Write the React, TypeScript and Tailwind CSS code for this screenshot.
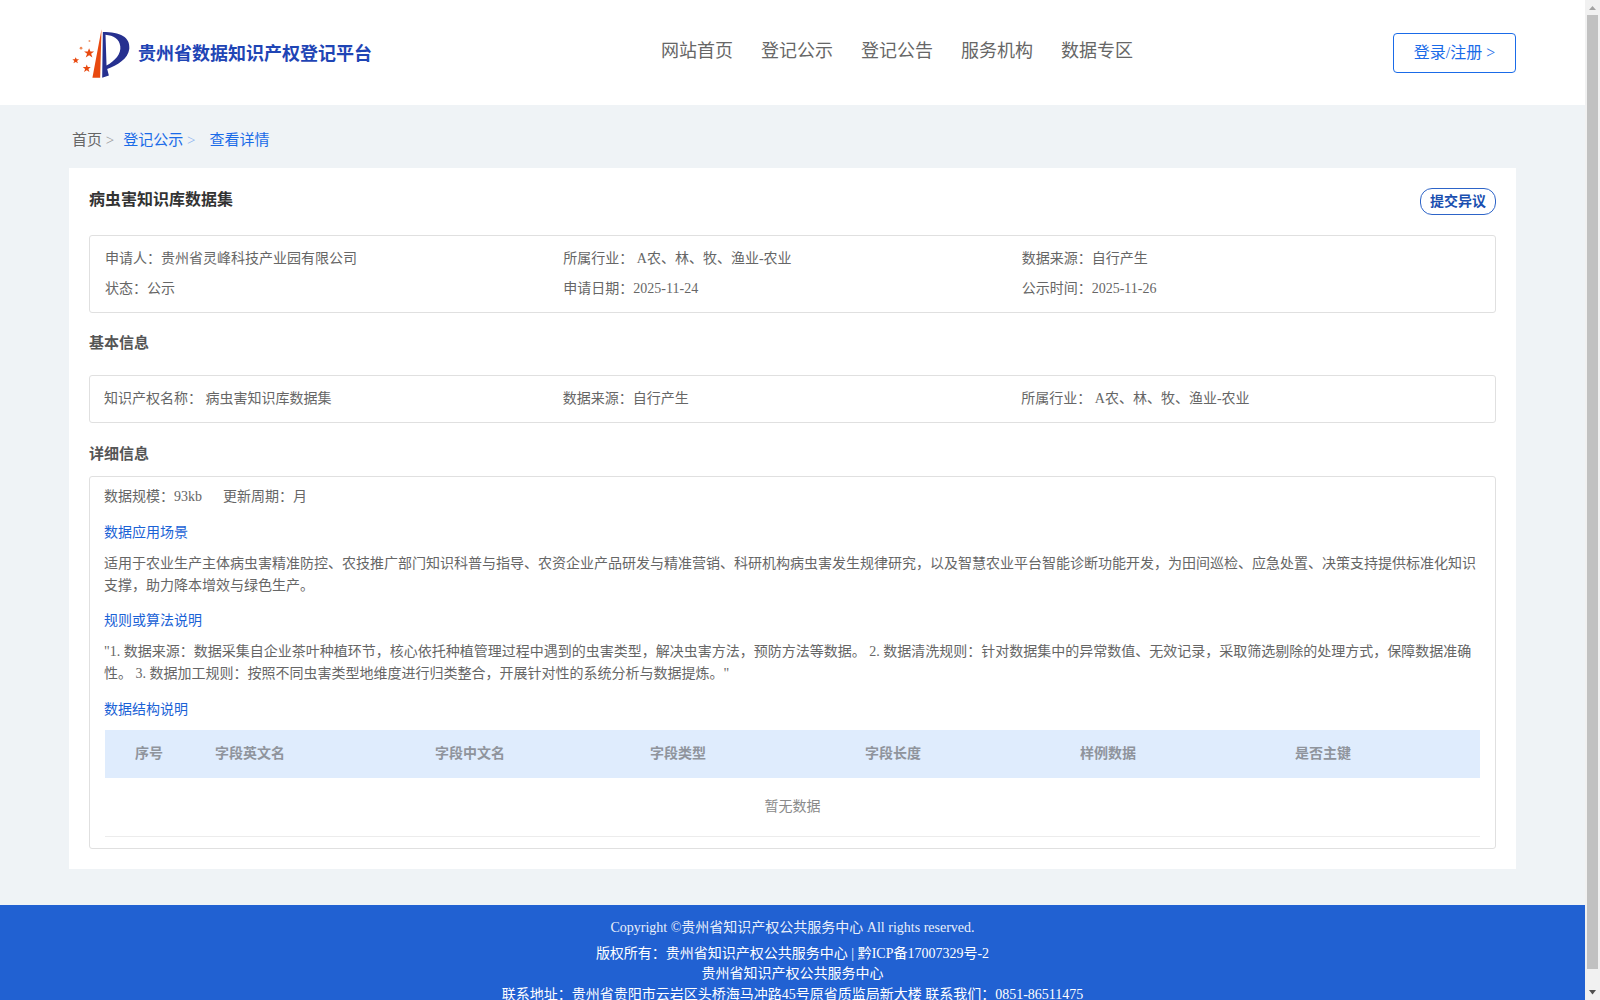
import React from "react";

const FONT = "font-['Liberation_Serif','Noto_Sans_CJK_SC',serif]";

const navItems = ["网站首页", "登记公示", "登记公告", "服务机构", "数据专区"];

// columns of the table header
const columns = [
  { label: "字段英文名", width: "w-[220px]" },
  { label: "字段中文名", width: "w-[215px]" },
  { label: "字段类型", width: "w-[215px]" },
  { label: "字段长度", width: "w-[215px]" },
  { label: "样例数据", width: "w-[215px]" },
  { label: "是否主键", width: "flex-1" },
];

const Logo = () => (
  <svg viewBox="30 35 185 155" className="w-[62px] h-[52px] shrink-0">
    <path d="M124 42 L97 186 L120 186 Z" fill="#e8490f" />
    <path
      d="M128 50 C180 50 210 65 207 100 C204 130 170 150 141 160 L146 180 L126 186 Z M139 150 C165 135 183 115 180 92 C177 70 160 60 136 58 Z"
      fill="#26308f"
      fillRule="evenodd"
    />
    <polygon points="87,98 91,108 102,108 93,115 97,126 87,119 77,126 81,115 72,108 83,108" fill="#e8490f" />
    <polygon points="47,125 50,131 57,131 51,136 54,143 47,139 40,143 43,136 37,131 44,131" fill="#e8490f" />
    <polygon points="80,147 83,154 92,154 85,160 88,169 80,164 72,169 75,160 68,154 77,154" fill="#e8490f" />
    <circle cx="63" cy="98" r="4" fill="#ef8a5a" />
    <circle cx="88" cy="77" r="3" fill="#ef9a70" />
  </svg>
);

const Header = () => (
  <header className="h-[105px] bg-white flex items-center pl-[70px] pr-[69px] shrink-0">
    <div className="w-[591px] flex items-center gap-[6px] shrink-0">
      <Logo />
      <span className="text-[18px] font-bold text-[#1f45b5] mt-[4px] whitespace-nowrap">
        贵州省数据知识产权登记平台
      </span>
    </div>
    <nav className="flex gap-[28px] text-[18px] text-[#666] -mt-[2px]">
      {navItems.map((item) => (
        <span key={item}>{item}</span>
      ))}
    </nav>
    <button className="ml-auto w-[123px] h-[40px] rounded border border-[#1a6be8] text-[#1a6be8] text-[16px] mt-[1px]">
      登录/注册 &gt;
    </button>
  </header>
);

const InfoBox = ({ rows, className }: { rows: string[][]; className: string }) => (
  <div className={`border border-[#e0e0e0] rounded-[3px] text-[14px] text-[#666] ${className}`}>
    {rows.map((row) => (
      <div key={row[0]} className="grid grid-cols-3 h-[30px] items-center">
        {row.map((cell) => (
          <div key={cell}>{cell}</div>
        ))}
      </div>
    ))}
  </div>
);

const BlueTitle = ({ children, className }: { children: React.ReactNode; className: string }) => (
  <div className={`text-[14px] leading-[22px] text-[#1a62d6] ${className}`}>{children}</div>
);

const Detail = () => (
  <div className="border border-[#e0e0e0] rounded-[3px] mt-[11px] h-[373px] pl-[14px] pr-[15px] text-[14px] text-[#666]">
    <div className="leading-[22px] mt-[9px] flex gap-[21px]">
      <span>数据规模：93kb</span>
      <span>更新周期：月</span>
    </div>
    <BlueTitle className="mt-[14px]">数据应用场景</BlueTitle>
    <p className="mt-[9px] leading-[22px]">
      适用于农业生产主体病虫害精准防控、农技推广部门知识科普与指导、农资企业产品研发与精准营销、科研机构病虫害发生规律研究，以及智慧农业平台智能诊断功能开发，为田间巡检、应急处置、决策支持提供标准化知识支撑，助力降本增效与绿色生产。
    </p>
    <BlueTitle className="mt-[13px]">规则或算法说明</BlueTitle>
    <p className="mt-[9px] leading-[22px]">
      "1. 数据来源：数据采集自企业茶叶种植环节，核心依托种植管理过程中遇到的虫害类型，解决虫害方法，预防方法等数据。 2. 数据清洗规则：针对数据集中的异常数值、无效记录，采取筛选剔除的处理方式，保障数据准确性。 3. 数据加工规则：按照不同虫害类型地维度进行归类整合，开展针对性的系统分析与数据提炼。"
    </p>
    <BlueTitle className="mt-[14px]">数据结构说明</BlueTitle>
    <div className="ml-[1px] mt-[9px] h-[48px] pb-[2px] bg-[#dfecfd] flex items-center font-bold text-[#8f949c]">
      <div className="w-[110px] pl-[30px] shrink-0">序号</div>
      {columns.map((col) => (
        <div key={col.label} className={`${col.width} shrink-0`}>{col.label}</div>
      ))}
    </div>
    <div className="ml-[1px] h-[59px] pb-[1px] flex items-center justify-center border-b border-[#ececec] text-[#8a8a8a]">
      暂无数据
    </div>
  </div>
);

const Scrollbar = () => (
  <div className="w-[15px] h-full bg-[#f1f1f1] flex flex-col items-center shrink-0">
    <svg viewBox="0 0 15 15" className="w-[15px] h-[15px] shrink-0">
      <path d="M4 10 L7.5 6 L11 10 Z" fill="#a3a3a3" />
    </svg>
    <div className="w-[11px] h-[954px] bg-[#c1c1c1]" />
    <div className="flex-1" />
    <svg viewBox="0 0 15 15" className="w-[15px] h-[15px] shrink-0">
      <path d="M4 5 L11 5 L7.5 9.5 Z" fill="#505050" />
    </svg>
  </div>
);

const App: React.FC = () => {
  return (
    <div className={`h-screen overflow-hidden flex bg-[#eff3f6] ${FONT}`}>
      <div className="flex-1 min-w-0 h-[1000px] overflow-hidden flex flex-col">
        <Header />
        {/* breadcrumb */}
        <div className="h-[63px] pl-[72px] pt-[24px] text-[15px] leading-[22px] text-[#666] shrink-0">
          首页 <span className="text-[#999]">&gt;</span>
          <span className="text-[#1a6be8] ml-[9px]">登记公示 <span className="text-[#8db4f0]">&gt;</span></span>
          <span className="text-[#1a6be8] ml-[14px]">查看详情</span>
        </div>

        <main className="mx-[69px] h-[701px] bg-white px-[20px] shrink-0">
          <div className="flex justify-between items-start pt-[20px] h-[67px]">
            <h1 className="text-[16px] leading-[24px] font-bold text-[#333]">病虫害知识库数据集</h1>
            <button className="w-[76px] h-[27px] rounded-[12px] border border-[#2d64c8] text-[14px] font-bold text-[#1a4fb0]">
              提交异议
            </button>
          </div>

          <InfoBox
            className="h-[78px] px-[15px] pt-[7px]"
            rows={[
              ["申请人：贵州省灵峰科技产业园有限公司", "所属行业： A农、林、牧、渔业-农业", "数据来源：自行产生"],
              ["状态：公示", "申请日期：2025-11-24", "公示时间：2025-11-26"],
            ]}
          />

          <h2 className="mt-[19px] text-[15px] leading-[22px] font-bold text-[#555]">基本信息</h2>
          <InfoBox
            className="mt-[21px] h-[48px] pl-[14px] pr-[15px] pt-[7px]"
            rows={[["知识产权名称： 病虫害知识库数据集", "数据来源：自行产生", "所属行业： A农、林、牧、渔业-农业"]]}
          />

          <h2 className="mt-[20px] text-[15px] leading-[22px] font-bold text-[#555]">详细信息</h2>
          <Detail />
        </main>

        <footer className="mt-[36px] flex-1 bg-[#2161d2] text-white text-[14px] text-center pt-[13px] leading-[20.5px]">
          <div className="opacity-90 mb-[5px]">Copyright ©贵州省知识产权公共服务中心 All rights reserved.</div>
          <div>版权所有：贵州省知识产权公共服务中心 | 黔ICP备17007329号-2</div>
          <div>贵州省知识产权公共服务中心</div>
          <div>联系地址：贵州省贵阳市云岩区头桥海马冲路45号原省质监局新大楼 联系我们：0851-86511475</div>
        </footer>
      </div>
      <Scrollbar />
    </div>
  );
};

export default App;
